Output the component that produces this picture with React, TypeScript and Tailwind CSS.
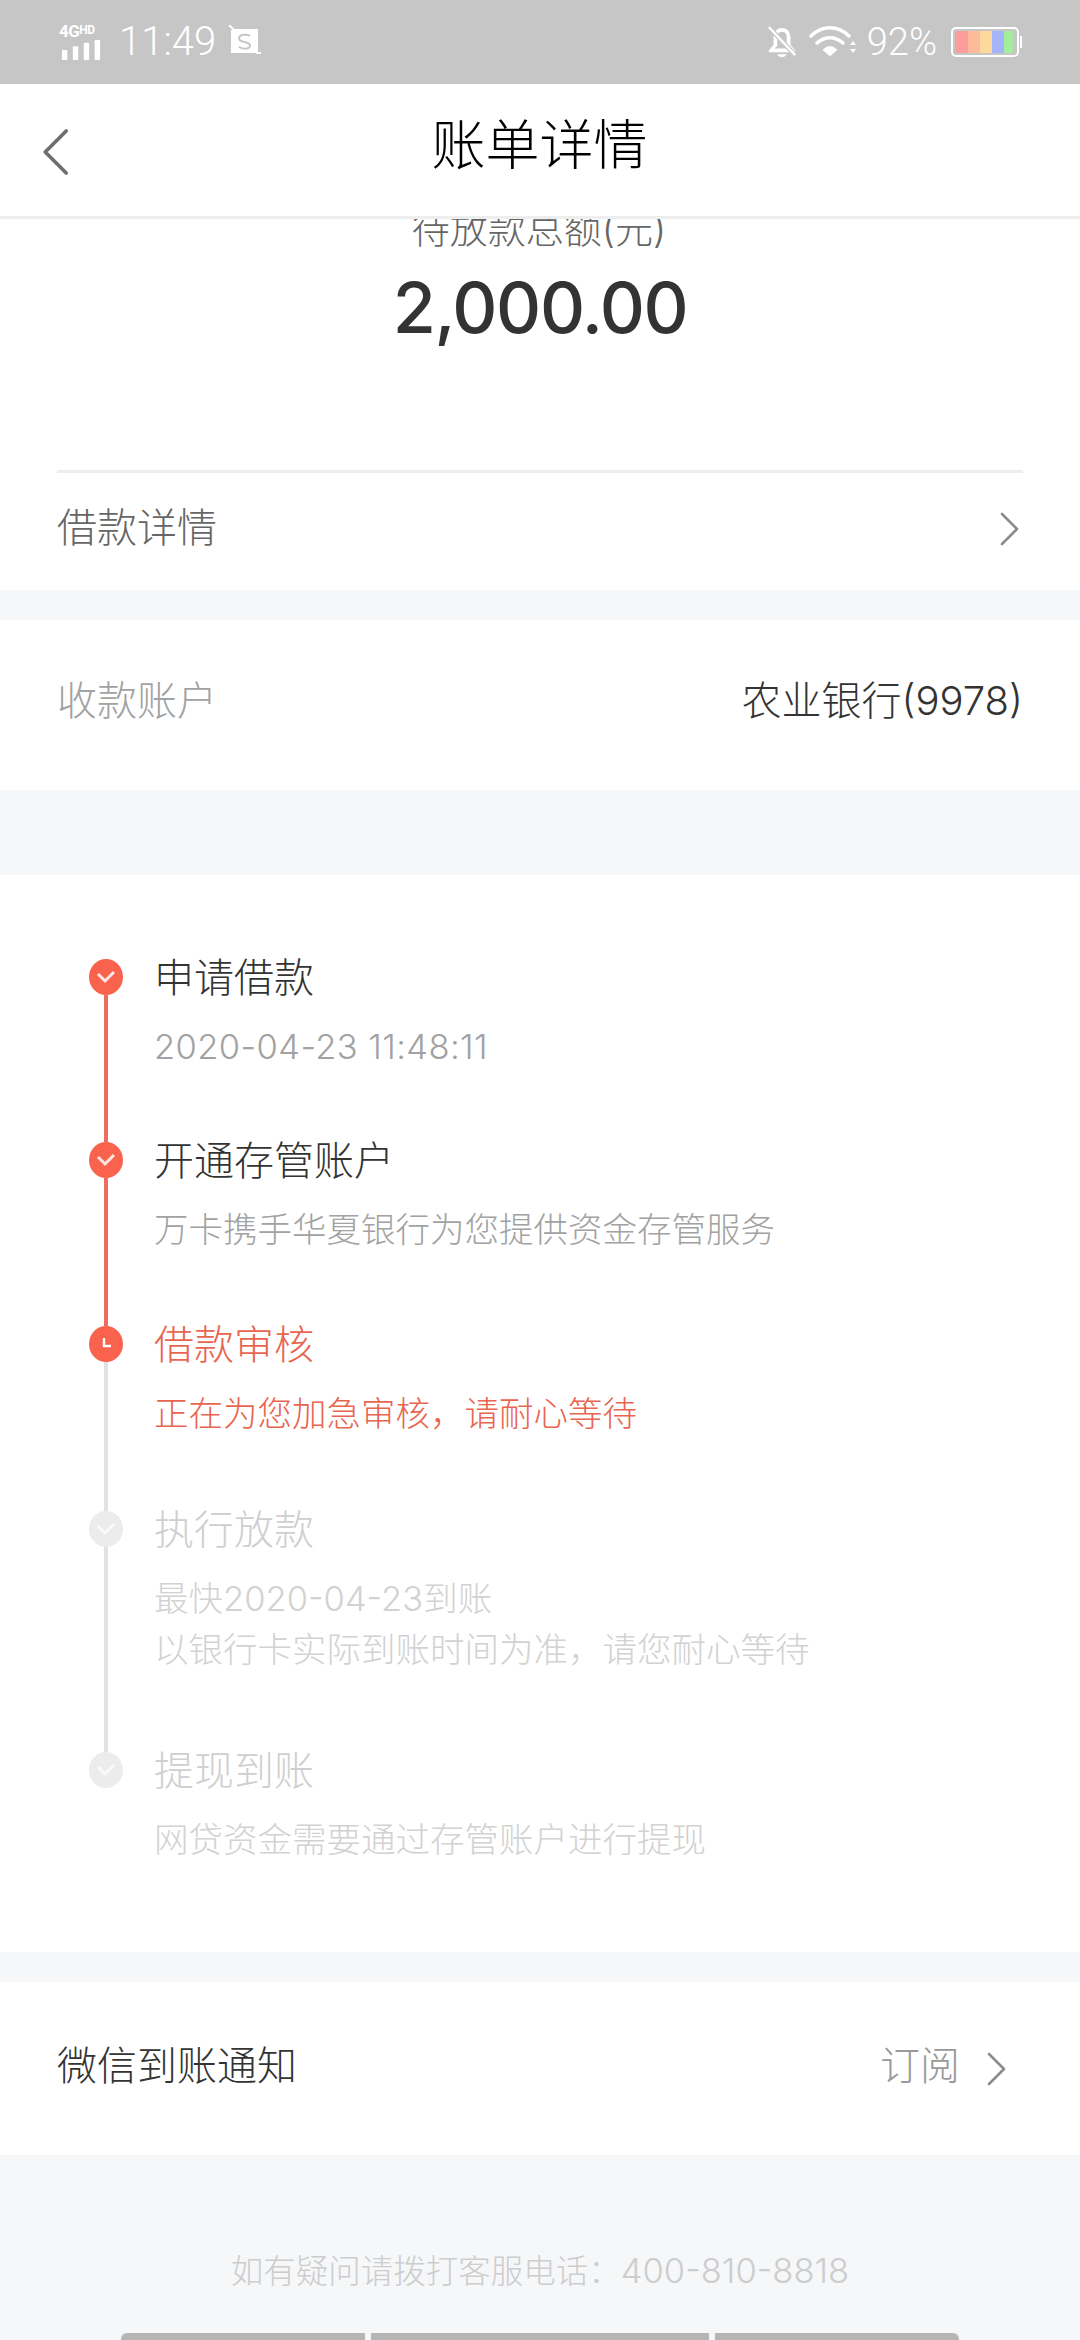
const FONT = "font-['Inter','Noto_Sans_CJK_SC',sans-serif]";

function Chevron({ className }: { className: string }) {
  return (
    <svg viewBox="0 0 20 34" className={className} fill="none" stroke="currentColor" strokeWidth="2.6" strokeLinecap="round" strokeLinejoin="round">
      <path d="M2 2l15 15L2 32" />
    </svg>
  );
}

function StatusBar() {
  return (
    <div className="h-[84px] bg-[#c6c6c6] flex items-center justify-between pl-[59px] pr-[58px] text-white font-['Roboto',sans-serif]">
      <div className="flex items-center">
        <div className="w-[46px] flex flex-col gap-[1px]">
          <span className="text-[17px] leading-[15px] font-bold tracking-[-0.5px]">
            4G<span className="text-[12px] align-top leading-[12px]">HD</span>
          </span>
          <svg viewBox="0 0 44 22" className="w-[44px] h-[20px]" fill="#fff">
            <rect x="1" y="11" width="6" height="11" rx="1" />
            <rect x="13" y="7" width="6" height="15" rx="1" />
            <rect x="25" y="3" width="6" height="19" rx="1" />
            <rect x="37" y="0" width="6" height="22" rx="1" />
          </svg>
        </div>
        <span className="ml-[14px] text-[40px] leading-none font-light">11:49</span>
        <svg viewBox="0 0 34 34" className="ml-[11px] w-[34px] h-[34px]">
          <path d="M2 0l5 5h23v23h4" stroke="#fff" strokeWidth="2" fill="none" />
          <rect x="4" y="5" width="26" height="23" fill="#fff" />
          <path d="M23 11c-2-2-11-2-11 2.500s11 2.500 11 7-9 3.500-11 1" stroke="#c6c6c6" strokeWidth="2" fill="none" />
        </svg>
      </div>
      <div className="flex items-center">
        <svg viewBox="0 0 34 38" className="w-[32px] h-[36px]" fill="#fff">
          <path d="M17 4c-6 0-9 5-9 10v8l-5 6v2h28v-2l-5-6v-8c0-5-3-10-9-10zm0 4c4 0 5 3 5 6v9l3 3H9l3-3v-9c0-3 1-6 5-6z" />
          <path d="M12 32h10c-1 4-9 4-10 0z" />
          <path d="M3 3l28 30" stroke="#c6c6c6" strokeWidth="5" />
          <path d="M3 3l28 30" stroke="#fff" strokeWidth="2.5" />
        </svg>
        <svg viewBox="0 0 48 34" className="ml-[11px] w-[48px] h-[34px]" fill="none" stroke="#fff" strokeLinecap="round">
          <path d="M2 11c11-11 27-11 38 0" strokeWidth="3.5" />
          <path d="M8 18c8-7 18-7 26 0" strokeWidth="3.5" />
          <path d="M15 25c4-4 8-4 12 0l-6 5z" fill="#fff" strokeWidth="2" />
          <path d="M41 20l3-4 3 4zM41 24l3 4 3-4z" fill="#fff" stroke="none" />
        </svg>
        <span className="ml-[10px] text-[38px] leading-none font-light">92%</span>
        <div className="ml-[14px] flex items-center">
          <div className="w-[68px] h-[30px] border-[2px] border-white rounded-[5px] p-[2px] flex">
            <div className="w-[13px] bg-[#fb9e9b] rounded-l-[2px]" />
            <div className="w-[12px] bg-[#fdbb9c]" />
            <div className="w-[12px] bg-[#fdd99b]" />
            <div className="w-[12px] bg-[#a4b4fb]" />
            <div className="w-[9px] bg-[#a3ee9c] rounded-r-[2px]" />
          </div>
          <div className="ml-[1px] w-[2px] h-[12px] bg-white" />
        </div>
      </div>
    </div>
  );
}

function Header() {
  return (
    <div className="relative z-10 h-[135px] bg-white border-b-[3px] border-[#eeeeee] flex items-center justify-center">
      <Chevron className="absolute left-[41px] top-[42px] w-[28px] h-[52px] rotate-180 text-[#6e6e6e]" />
      <h1 className="text-[54px] leading-none font-light text-black -mt-[8px] mr-[1px]">账单详情</h1>
    </div>
  );
}

type Step = {
  title: string;
  lines: string[];
  state: "done" | "current" | "todo";
  height: string;
};

const steps: Step[] = [
  { title: "申请借款", lines: ["2020-04-23 11:48:11"], state: "done", height: "h-[183px]" },
  { title: "开通存管账户", lines: ["万卡携手华夏银行为您提供资金存管服务"], state: "done", height: "h-[184px]" },
  { title: "借款审核", lines: ["正在为您加急审核，请耐心等待"], state: "current", height: "h-[185px]" },
  {
    title: "执行放款",
    lines: ["最快2020-04-23到账", "以银行卡实际到账时间为准，请您耐心等待"],
    state: "todo",
    height: "h-[241px]",
  },
  { title: "提现到账", lines: ["网贷资金需要通过存管账户进行提现"], state: "todo", height: "h-[120px]" },
];

function StepDot({ state }: { state: Step["state"] }) {
  if (state === "current") {
    return (
      <svg viewBox="0 0 34 36" className="w-[34px] h-[36px] shrink-0">
        <ellipse cx="17" cy="18" rx="17" ry="18" fill="#f9634e" />
        <path d="M15 12v8h7" stroke="#fff" strokeWidth="2.4" fill="none" />
      </svg>
    );
  }
  return (
    <svg viewBox="0 0 34 36" className="w-[34px] h-[36px] shrink-0">
      <ellipse cx="17" cy="18" rx="17" ry="18" fill={state === "done" ? "#f9634e" : "#ececec"} />
      <path d="M9 15l7 7 9-9" stroke={state === "done" ? "#fde6e1" : "#fafafa"} strokeWidth="3" fill="none" />
    </svg>
  );
}

function Timeline() {
  return (
    <div className="bg-white h-[1077px] pt-[84px] pl-[89px]">
      {steps.map((s, i) => {
        const last = i === steps.length - 1;
        const titleColor = s.state === "done" ? "text-[#333333]" : s.state === "current" ? "text-[#e8654f]" : "text-[#cfcfcf]";
        const subColor = s.state === "done" ? "text-[#a2a2a2]" : s.state === "current" ? "text-[#e8654f]" : "text-[#d2d2d2]";
        return (
          <div key={s.title} className={`flex ${s.height}`}>
            <div className="w-[34px] flex flex-col items-center">
              <StepDot state={s.state} />
              {!last && <div className={`w-[4px] flex-1 ${s.state === "done" ? "bg-[#e8705c]" : "bg-[#e2e2e2]"}`} />}
            </div>
            <div className="ml-[31px] -mt-[4px] font-light">
              <div className={`text-[40px] leading-[46px] ${titleColor}`}>{s.title}</div>
              <div className={`mt-[20px] text-[34.5px] leading-[51px] ${subColor}`}>
                {s.lines.map((l) => (
                  <div key={l} className={i === 0 ? "tracking-[0.4px]" : undefined}>{l}</div>
                ))}
              </div>
            </div>
          </div>
        );
      })}
    </div>
  );
}

export default function App() {
  return (
    <div className={`w-[1080px] h-[2340px] overflow-hidden bg-[#f6f7f9] relative ${FONT}`}>
      <StatusBar />
      <Header />
      <div className="bg-white h-[371px] overflow-hidden">
        <div className="text-center text-[38px] leading-[40px] font-light text-[#666666] -mt-[10px] -ml-[2px]">待放款总额(元)</div>
        <div className="text-center text-[70px] leading-[80px] text-[#333333] font-medium mt-[19px] tracking-[-1.4px]">2,000.00</div>
        <div className="mx-[57px] mt-[122px] border-t-[3px] border-[#eeeeee] h-[115px] flex items-center justify-between">
          <span className="text-[40px] font-light text-[#666666] -mt-[2px]">借款详情</span>
          <Chevron className="w-[20px] h-[34px] mr-[3px] text-[#8c8c8c]" />
        </div>
      </div>
      <div className="mt-[30px] bg-white h-[170px] px-[57px] flex items-center justify-between font-light">
        <span className="text-[40px] text-[#a2a2a2] -mt-[9px]">收款账户</span>
        <span className="text-[40px] text-[#333333] -mt-[9px]">农业银行(9978)</span>
      </div>
      <div className="mt-[85px]">
        <Timeline />
      </div>
      <div className="mt-[30px] bg-white h-[173px] pl-[57px] pr-[73px] flex items-center justify-between font-light">
        <span className="text-[40px] text-[#333333] -mt-[6px]">微信到账通知</span>
        <div className="flex items-center">
          <span className="text-[40px] text-[#999999] -mt-[6px]">订阅</span>
          <Chevron className="ml-[27px] w-[20px] h-[34px] text-[#8c8c8c]" />
        </div>
      </div>
      <div className="mt-[91px] text-center text-[32.5px] leading-[50px] font-light text-[#cdcdcd]">
        如有疑问请拨打客服电话：<span className="text-[34.5px]">400-810-8818</span>
      </div>
      <div className="absolute left-[121px] bottom-0 flex gap-[6px] h-[7px]">
        <div className="w-[244px] bg-[#b5b5b5] rounded-tl-[6px]" />
        <div className="w-[338px] bg-[#b5b5b5]" />
        <div className="w-[244px] bg-[#b5b5b5] rounded-tr-[6px]" />
      </div>
    </div>
  );
}
